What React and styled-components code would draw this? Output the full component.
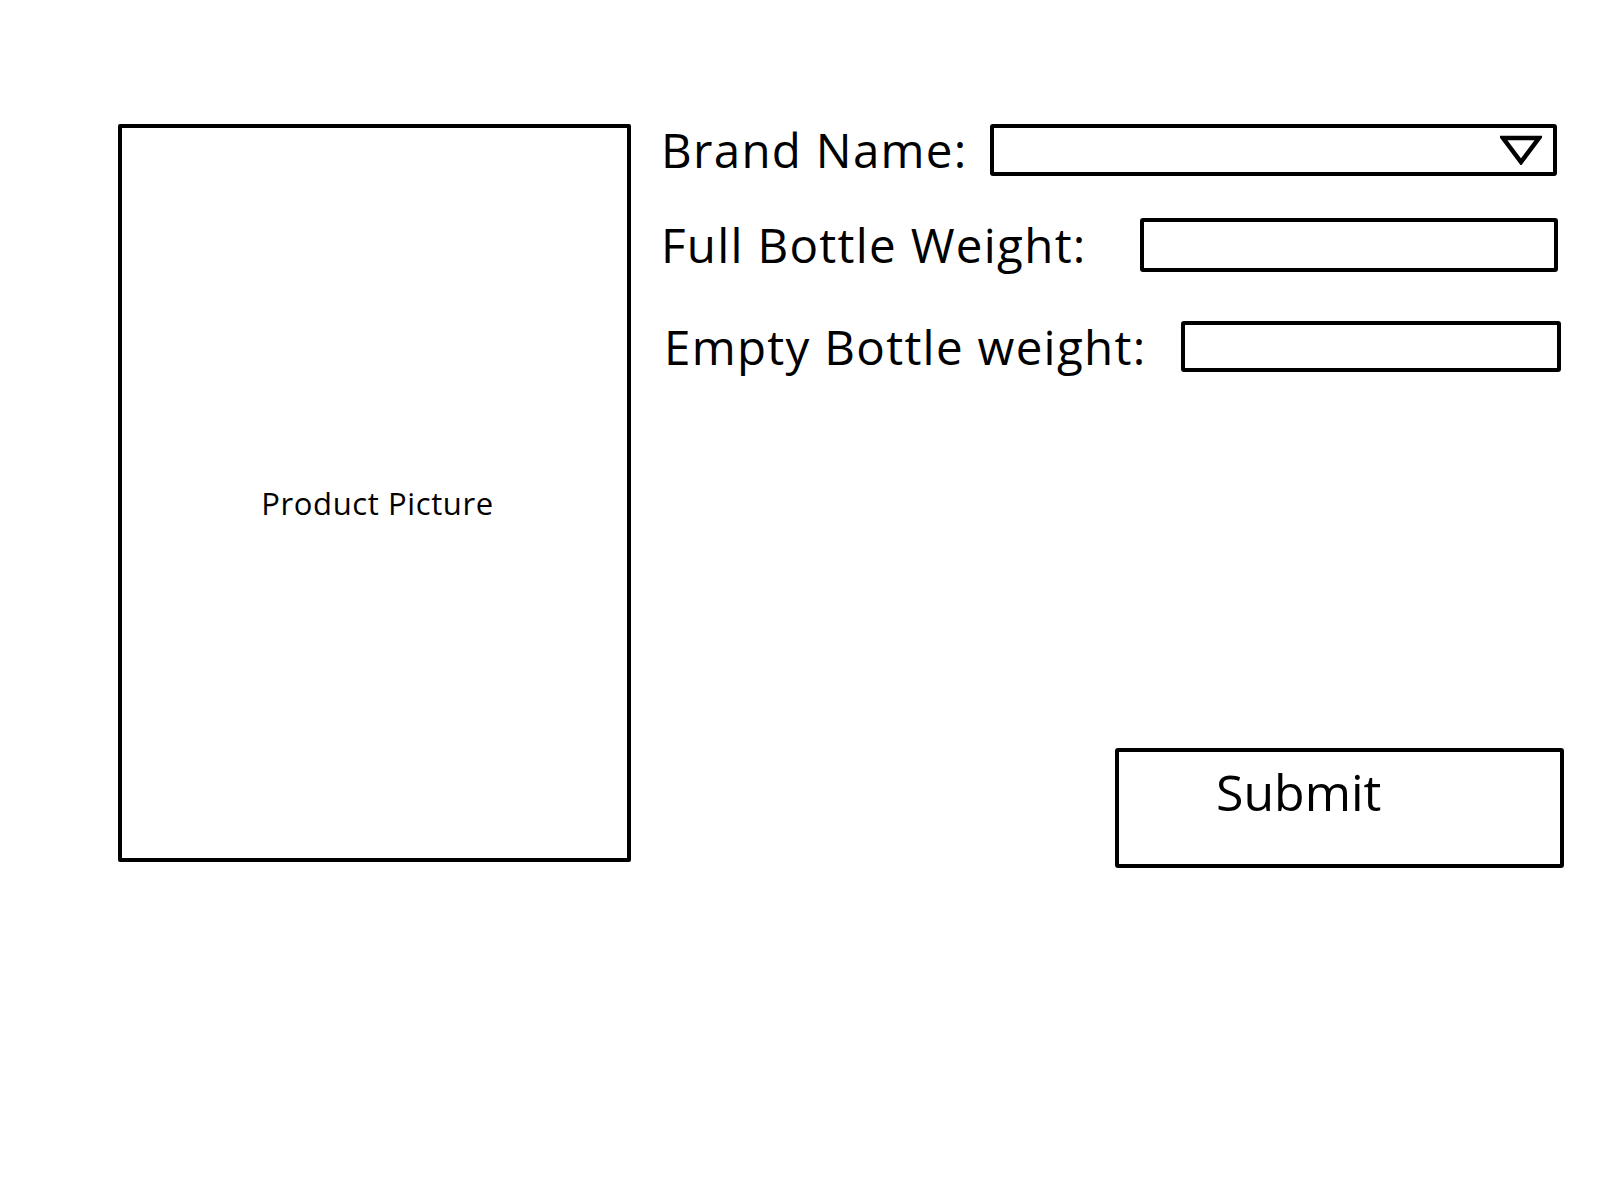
import React from "react";
import styled, { createGlobalStyle } from "styled-components";

const GlobalStyle = createGlobalStyle`
  html, body {
    margin: 0;
    padding: 0;
    background: #ffffff;
  }
  body {
    font-family: "Open Sans", "Noto Sans", "DejaVu Sans", sans-serif;
    color: #000;
  }
`;

const Page = styled.div`
  display: flex;
  align-items: flex-start;
  gap: 30px;
  padding: 124px 0 0 118px;
  width: 1600px;
  height: 1200px;
  box-sizing: border-box;
`;

const Picture = styled.div`
  width: 513px;
  height: 738px;
  box-sizing: border-box;
  border: 4px solid #000;
  border-radius: 2px;
  display: flex;
  align-items: center;
  justify-content: center;
  font-size: 31px;
  letter-spacing: 0.6px;
  padding: 20px 0 0 6px;
`;

const Form = styled.div`
  display: flex;
  flex-direction: column;
  width: 903px;
`;

const Row = styled.div`
  display: flex;
  align-items: center;
  justify-content: space-between;
  height: ${(p) => p.$h}px;
  margin-top: ${(p) => p.$mt}px;
  padding-left: ${(p) => p.$pl}px;
  padding-right: ${(p) => p.$pr}px;
`;

const Label = styled.label`
  font-size: 47.5px;
  letter-spacing: 1.3px;
  line-height: 1;
  white-space: nowrap;
`;

const Field = styled.div`
  width: ${(p) => p.$w}px;
  align-self: stretch;
  box-sizing: border-box;
  border: 4px solid #000;
  border-radius: 3px;
  display: flex;
  align-items: center;
  justify-content: flex-end;
  padding-right: 11px;
`;

const Submit = styled.button`
  align-self: flex-end;
  margin-top: 376px;
  width: 449px;
  height: 120px;
  box-sizing: border-box;
  border: 4px solid #000;
  border-radius: 3px;
  background: #fff;
  font-family: inherit;
  font-size: 50px;
  color: #000;
  display: flex;
  align-items: flex-start;
  padding: 10px 0 0 97px;
  line-height: 1.2;
  cursor: pointer;
`;

const Arrow = () => (
  <svg width="42" height="30" viewBox="0 0 42 30">
    <path d="M3 3 L39 3 L21 27 Z" fill="none" stroke="#000" strokeWidth="4.5" strokeLinejoin="miter" />
  </svg>
);

export default function App() {
  return (
    <>
      <GlobalStyle />
      <Page>
        <Picture>Product Picture</Picture>
        <Form>
          <Row $h={52} $mt={0} $pl={0} $pr={7}>
            <Label>Brand Name:</Label>
            <Field $w={567}>
              <Arrow />
            </Field>
          </Row>
          <Row $h={54} $mt={42} $pl={0} $pr={6}>
            <Label>Full Bottle Weight:</Label>
            <Field $w={418} />
          </Row>
          <Row $h={51} $mt={49} $pl={3} $pr={3}>
            <Label>Empty Bottle weight:</Label>
            <Field $w={380} />
          </Row>
          <Submit>Submit</Submit>
        </Form>
      </Page>
    </>
  );
}
